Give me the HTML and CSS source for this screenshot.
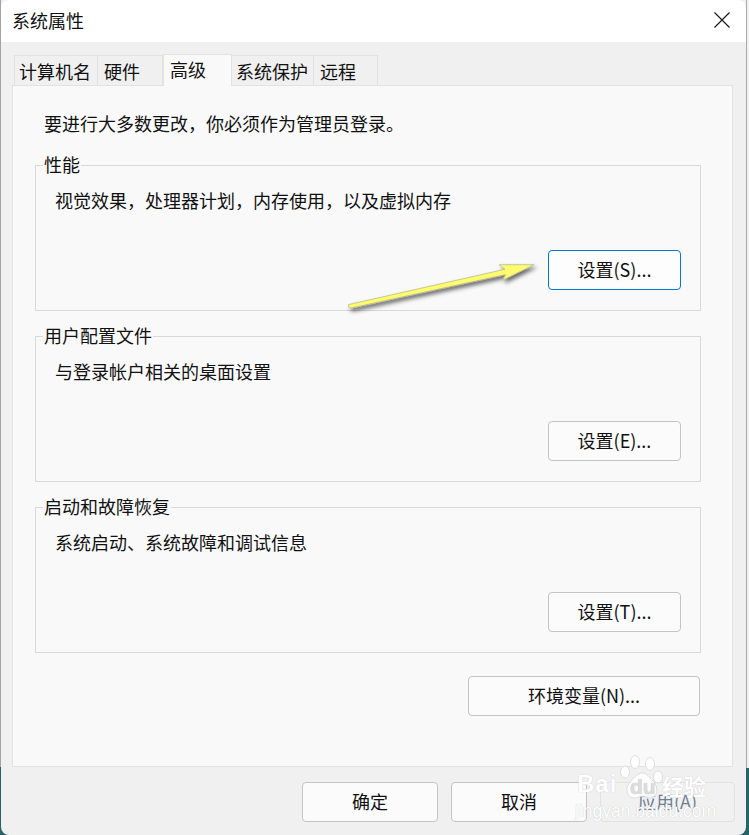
FILE: index.html
```html
<!DOCTYPE html>
<html lang="zh-CN">
<head>
<meta charset="utf-8">
<title>系统属性</title>
<link rel="stylesheet" href="styles.css">
</head>
<body>
<div class="window">
  <header class="titlebar">
    <span class="title">系统属性</span>
    <svg class="close" width="16" height="16" viewBox="0 0 16 16" aria-hidden="true"><path d="M.5.5l15 15M15.500.5l-15 15" fill="none" stroke="#1a1a1a" stroke-width="1.2"/></svg>
  </header>
  <main class="content">
    <nav class="tabs">
      <div class="tab tab-name">计算机名</div>
      <div class="tab tab-hw">硬件</div>
      <div class="tab tab-active">高级</div>
      <div class="tab tab-protect">系统保护</div>
      <div class="tab tab-remote">远程</div>
    </nav>
    <section class="panel">
      <p class="intro">要进行大多数更改，你必须作为管理员登录。</p>
      <fieldset class="group group-first">
        <legend>性能</legend>
        <p class="desc">视觉效果，处理器计划，内存使用，以及虚拟内存</p>
        <div class="group-actions"><button class="btn btn-set btn-focus">设置(S)...</button></div>
      </fieldset>
      <fieldset class="group">
        <legend>用户配置文件</legend>
        <p class="desc">与登录帐户相关的桌面设置</p>
        <div class="group-actions"><button class="btn btn-set">设置(E)...</button></div>
      </fieldset>
      <fieldset class="group">
        <legend>启动和故障恢复</legend>
        <p class="desc">系统启动、系统故障和调试信息</p>
        <div class="group-actions"><button class="btn btn-set">设置(T)...</button></div>
      </fieldset>
      <div class="env-row"><button class="btn btn-env">环境变量(N)...</button></div>
    </section>
    <footer class="footer">
      <button class="btn btn-foot">确定</button>
      <button class="btn btn-foot">取消</button>
      <button class="btn btn-foot btn-disabled">应用(A)</button>
    </footer>
  </main>
</div>

<svg class="arrow" width="200" height="60" viewBox="340 255 200 60" aria-hidden="true">
  <defs><filter id="sh" x="-10%" y="-30%" width="120%" height="180%"><feDropShadow dx="2" dy="3" stdDeviation="2" flood-color="#000" flood-opacity=".6"/></filter></defs>
  <path d="M348.500 304.600 L505 269.300 L499 264.700 L534 264.700 L503 280 L505.500 274.600 L351 308 Q347 307 348.500 304.600Z" fill="#fdfb6e" stroke="#b5b48c" stroke-width=".7" filter="url(#sh)"/>
</svg>

<div class="watermark" aria-hidden="true">
  <svg class="paw" width="50" height="62" viewBox="0 0 50 62">
    <g fill="#fff" stroke="#cfcfcf" stroke-width=".7" opacity=".9">
      <ellipse cx="6" cy="19" rx="4.500" ry="6"/>
      <ellipse cx="16" cy="9" rx="4.500" ry="6.500"/>
      <ellipse cx="31" cy="11" rx="4.500" ry="6.500"/>
      <ellipse cx="39" cy="24" rx="4.500" ry="6"/>
      <path d="M23 20c5 0 7 4 11 8 6 6 5 16-2 17-3 .4-6-1.500-9-1.500s-6 2-9 1.500c-7-1-8-11-2-17 4-4 6-8 11-8z"/>
    </g>
  </svg>
  <span class="wm-bai">Bai</span>
  <span class="wm-du">du</span>
  <span class="wm-jy">经验</span>
  <span class="wm-url">jingyan.baidu.com</span>
</div>
</body>
</html>
```
FILE: styles.css
```css
* { box-sizing: border-box; }
html, body { margin: 0; height: 835px; overflow: hidden; }
body {
  position: relative;
  padding-left: 1px;
  font-family: "Noto Sans CJK SC", "Noto Sans", sans-serif;
  font-size: 18px;
  line-height: 24px;
  color: #111;
  background:
    linear-gradient(#a3a3a3 0 767px, #2b6169 767px) left top / 1px 100% no-repeat,
    linear-gradient(#a8a8a8 0 768px, #2b6169 768px) 746px 0 / 1px 100% no-repeat,
    linear-gradient(#f2f2f2 0 768px, #2b6169 768px);
}
.window {
  width: 745px;
  height: 835px;
  display: flex;
  flex-direction: column;
  background: #f0f0f0;
  border-radius: 8px;
  overflow: hidden;
}
.titlebar {
  height: 42px;
  flex: none;
  display: flex;
  align-items: center;
  justify-content: space-between;
  padding: 0 16px 2px 11px;
  background: #fff;
}
.close { margin-top: 0; }
.content { flex: 1; display: flex; flex-direction: column; padding: 12px 13px 0 11px; min-height: 0; }
.tabs { display: flex; align-items: flex-end; height: 32px; margin: 0 0 -1px 2px; position: relative; z-index: 1; }
.tab {
  height: 30px;
  border: 1px solid #e2e2e2;
  border-bottom: 0;
  background: #f0f0f0;
  padding: 3px 0 0 4px;
  white-space: nowrap;
  margin-bottom: 1px;
}
.tab-name { width: 84px; }
.tab-hw { width: 65px; border-left: 0; padding-left: 6px; }
.tab-active {
  width: 69px;
  height: 32px;
  margin-bottom: 0;
  padding: 2px 0 0 6px;
  background: #f9f9f9;
}
.tab-protect { width: 82px; border-left: 0; padding-left: 4px; }
.tab-remote { width: 64px; border-left: 0; padding-left: 6px; }
.panel {
  flex: 1;
  background: #f9f9f9;
  border: 1px solid #e2e2e2;
  padding: 25px 31px 0 22px;
  min-height: 0;
}
.intro { margin: 0 0 21px 9px; }
.group {
  margin: 16px 0 0;
  padding: 0 19px 20px 19px;
  border: 1px solid #d9d9d9;
  min-width: 0;
}
.group-first { margin-top: 0; }
.group legend { margin-left: -12px; padding: 0 1px; line-height: 16px; height: 18px; }
.desc { margin: 14px 0 38px 0; }
.group-actions { display: flex; justify-content: flex-end; }
.btn {
  font: inherit;
  color: #111;
  height: 40px;
  padding: 0 0 2px;
  border: 1px solid #c4c4c4;
  border-radius: 4px;
  background: #fbfbfb;
  white-space: nowrap;
}
.btn-set { width: 133px; }
.btn-focus { border-color: #0078d4; background: #fdfdfd; }
.env-row { display: flex; justify-content: flex-end; margin: 23px 1px 0 0; }
.btn-env { width: 232px; }
.footer { flex: none; height: 68px; display: flex; justify-content: flex-end; gap: 13px; padding: 15px 0 0; margin-right: -2px; }
.btn-foot { width: 136px; }
.btn-disabled { color: #6f7f8f; border-color: #e2e2e2; background: #f1f1f1; width: 135px; }
.arrow { position: absolute; left: 340px; top: 255px; }
.watermark { position: absolute; left: 0; top: 0; width: 749px; height: 835px; pointer-events: none; color: #fff; font-family: "Liberation Sans", sans-serif; }
.paw { position: absolute; left: 619px; top: 753px; }
.watermark span { position: absolute; text-shadow: 0 0 1px #bcbcbc; }
.wm-bai { left: 577px; top: 770px; font-size: 24px; line-height: 28px; font-weight: 700; letter-spacing: 1px; }
.wm-du { left: 630px; top: 775px; font-size: 21px; line-height: 24px; font-weight: 700; color: #dcdcdc; }
.wm-jy { left: 662px; top: 772px; font: 700 22px/26px "Noto Sans CJK SC", sans-serif; }
.wm-url { left: 575px; top: 801px; font-size: 17.500px; line-height: 20px; }
```
